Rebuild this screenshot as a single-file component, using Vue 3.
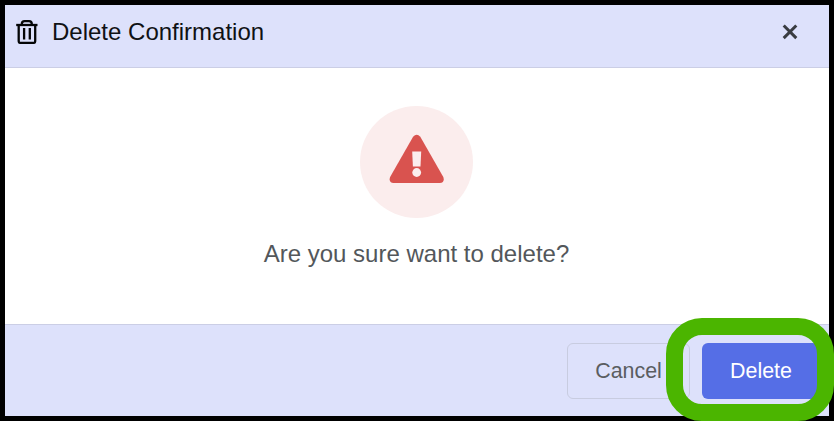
<template>
  <div class="dialog">
    <header class="dialog-header">
      <svg class="trash" viewBox="0 0 22 25" fill="none" stroke="#050607" stroke-width="2.3">
        <path d="M0.2 6H21.5" />
        <path d="M5.8 5.8V4.9Q5.8 2.1 8.6 2.1H13Q15.8 2.1 15.8 4.9V5.8" />
        <path d="M2.7 6V22.2Q2.7 23.9 4.4 23.9H17.5Q19.2 23.9 19.2 22.2V6" />
        <path d="M8.1 9V20.5M13.8 9V20.5" />
      </svg>
      <h1 class="title">Delete Confirmation</h1>
      <button class="close" aria-label="Close" @click="emit('close')">
        <svg viewBox="0 0 16 16" fill="none" stroke="#393c41" stroke-width="3">
          <path d="M1.7 1.5 14.3 14.1M14.3 1.5 1.7 14.1" />
        </svg>
      </button>
    </header>

    <main class="dialog-body">
      <div class="warning">
        <svg viewBox="-0.7 0 56 50">
          <path
            fill="#d9534f"
            d="M24.4 2.7Q28 -1.3 31.6 2.7L54.6 43Q56.4 48.2 51.2 49H4.8Q-0.4 48.2 1.4 43Z"
          />
          <path fill="#fbeded" d="M23.5 17.4H32.5L31.8 32.4H24.2Z" />
          <circle fill="#fbeded" cx="28" cy="38.5" r="4.4" />
        </svg>
      </div>
      <p class="message">Are you sure want to delete?</p>
    </main>

    <footer class="dialog-footer">
      <button class="btn cancel" @click="emit('close')">Cancel</button>
      <div class="marked">
        <button class="btn delete" @click="emit('confirm')">Delete</button>
        <!-- 绿色高亮框，盖在按钮上 -->
        <span class="highlight"></span>
      </div>
    </footer>
  </div>
</template>

<script setup>
const emit = defineEmits(['close', 'confirm'])
</script>

<style>
body { margin: 0; overflow: hidden; }
</style>

<style scoped>
.dialog {
  box-sizing: border-box;
  width: 834px;
  height: 421px;
  border: 5px solid #000;
  display: flex;
  flex-direction: column;
  background: #fff;
  font-family: "Liberation Sans", Arial, sans-serif;
}
.dialog-header {
  box-sizing: border-box;
  height: 63px;
  padding: 0 31px 9px 11px;
  display: flex;
  align-items: center;
  background: #dde1fb;
  border-bottom: 1px solid #cbcee5;
}
.trash { width: 22px; height: 25px; }
.title {
  margin: 0 auto 0 14px;
  font-size: 24px;
  font-weight: 400;
  line-height: 28px;
  color: #101114;
}
.close {
  padding: 0;
  border: 0;
  background: none;
  display: flex;
  cursor: pointer;
}
.close svg { width: 16px; height: 16px; }
.dialog-body {
  flex: 1;
  display: flex;
  flex-direction: column;
  align-items: center;
  padding: 38px 1px 0 0;
}
.warning {
  width: 113px;
  height: 112px;
  border-radius: 50%;
  background: #fbeded;
  display: flex;
  align-items: center;
  justify-content: center;
}
.warning svg { width: 56px; height: 50px; margin: 0 1px 7px 0; }
.message {
  margin: 22px 0 0;
  font-size: 24px;
  line-height: 28px;
  color: #53575b;
}
.dialog-footer {
  box-sizing: border-box;
  height: 92px;
  padding: 18px 10px 0 0;
  display: flex;
  justify-content: flex-end;
  align-items: flex-start;
  gap: 12px;
  background: #dde1fb;
  border-top: 1px solid #cbcee5;
}
.btn {
  box-sizing: border-box;
  height: 56px;
  padding: 0;
  border-radius: 6px;
  font-family: inherit;
  font-size: 21.4px;
  cursor: pointer;
  display: block;
}
.cancel {
  width: 123px;
  background: transparent;
  border: 1px solid #c8cce0;
  color: #5a5d61;
}
.marked { position: relative; }
.delete {
  width: 117px;
  padding-left: 1px;
  background: #556ee6;
  border: 0;
  color: #fff;
}
.highlight {
  box-sizing: border-box;
  position: absolute;
  top: -25px;
  left: -36px;
  width: 168px;
  height: 103px;
  border: 17px solid #4bb500;
  border-radius: 36px;
  pointer-events: none;
}
</style>
